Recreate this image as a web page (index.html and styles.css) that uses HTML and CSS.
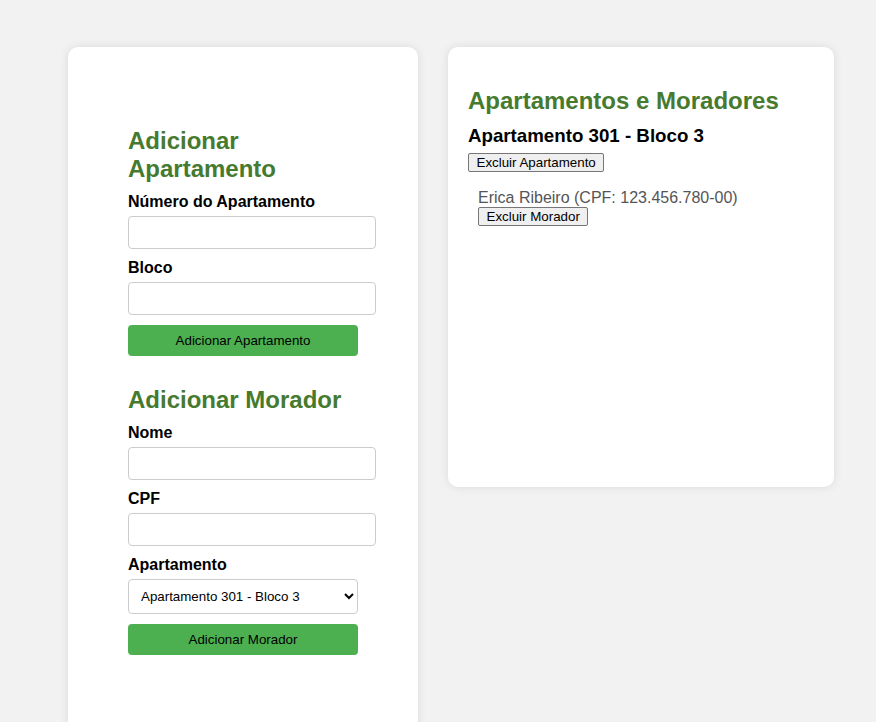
FILE: index.html
```html
<!DOCTYPE html>
<html lang="pt-BR">
<head>
<meta charset="UTF-8">
<title>Condomínio</title>
<link rel="stylesheet" href="styles.css">
</head>
<body>
<div class="container">
  <div class="card form-card">
    <form class="form-section">
      <h2>Adicionar Apartamento</h2>
      <label for="numero">Número do Apartamento</label>
      <input type="text" id="numero">
      <label for="bloco">Bloco</label>
      <input type="text" id="bloco">
      <button type="button" class="btn-add">Adicionar Apartamento</button>
    </form>
    <form class="form-section">
      <h2>Adicionar Morador</h2>
      <label for="nome">Nome</label>
      <input type="text" id="nome">
      <label for="cpf">CPF</label>
      <input type="text" id="cpf">
      <label for="apto">Apartamento</label>
      <select id="apto">
        <option>Apartamento 301 - Bloco 3</option>
      </select>
      <button type="button" class="btn-add">Adicionar Morador</button>
    </form>
  </div>
  <div class="card list-card">
    <h2>Apartamentos e Moradores</h2>
    <div class="apartment">
      <h3>Apartamento 301 - Bloco 3</h3>
      <button type="button" class="btn-del">Excluir Apartamento</button>
      <ul class="residents">
        <li>Erica Ribeiro (CPF: 123.456.780-00)<br><button type="button" class="btn-del">Excluir Morador</button></li>
      </ul>
    </div>
  </div>
</div>
</body>
</html>
```

FILE: styles.css
```css
html, body {
  margin: 0;
  background: #f2f2f2;
  font-family: Arial, "Liberation Sans", sans-serif;
}

.container {
  display: flex;
  align-items: flex-start;
  gap: 30px;
  padding: 47px 0 0 68px;
}

.card {
  background: #fff;
  border-radius: 10px;
  box-shadow: 0 0 10px rgba(0, 0, 0, 0.1);
}

.form-card {
  width: 230px;
  padding: 60px;
}

.list-card {
  width: 346px;
  min-height: 400px;
  padding: 20px;
}

h2 {
  color: #467a2e;
  font-size: 24px;
  margin: 20px 0 10px;
}

.form-section {
  margin: 0 0 30px;
}

label {
  display: block;
  font-weight: bold;
  font-size: 16px;
  margin-bottom: 5px;
}

input[type="text"] {
  display: block;
  width: 100%;
  padding: 8px;
  margin: 0 0 10px;
  border: 1px solid #ccc;
  border-radius: 4px;
  font-family: Arial, "Liberation Sans", sans-serif;
}

select {
  display: block;
  width: 100%;
  height: 35px;
  padding: 0 8px;
  margin: 0 0 10px;
  border: 1px solid #ccc;
  border-radius: 4px;
  background: #fff;
  font-family: Arial, "Liberation Sans", sans-serif;
  font-size: 13.33px;
}

.btn-add {
  display: block;
  width: 100%;
  padding: 8px;
  border: none;
  border-radius: 4px;
  background: #4caf50;
  color: #000;
  font-family: Arial, "Liberation Sans", sans-serif;
  font-size: 13.33px;
}

h3 {
  font-size: 18.72px;
  margin: 0 0 6px;
}

.btn-del {
  font-family: Arial, "Liberation Sans", sans-serif;
  font-size: 13.33px;
  padding: 1px 7.5px;
  border: 1px solid #767676;
  border-radius: 2px;
  background: #efefef;
  color: #000;
}

.residents {
  list-style: none;
  padding: 0 0 0 10px;
  margin: 17px 0 0;
}

.residents li {
  color: #555;
  font-size: 16px;
}
```
